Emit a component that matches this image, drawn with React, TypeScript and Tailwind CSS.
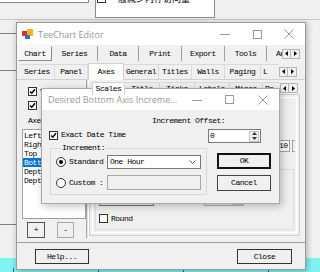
import React from "react";

const mono =
  "font-['Liberation_Mono',monospace] text-[8px] tracking-[-0.5px] leading-none text-black whitespace-nowrap";
const sans = "font-['Open_Sans','Noto_Sans',sans-serif]";

function Check({ checked }: { checked?: boolean }) {
  return (
    <span className="w-[9px] h-[9px] border border-[#333] bg-white flex items-center justify-center shrink-0">
      {checked && (
        <svg width="7" height="7" viewBox="0 0 7 7">
          <path d="M1 3.4 L2.8 5.3 L6 1.3" stroke="#000" strokeWidth="1.4" fill="none" />
        </svg>
      )}
    </span>
  );
}

function Radio({ on }: { on?: boolean }) {
  return (
    <span className="w-[10px] h-[10px] rounded-full border border-[#333] bg-white flex items-center justify-center shrink-0">
      {on && <span className="w-[4px] h-[4px] rounded-full bg-black" />}
    </span>
  );
}

function WinButtons({ w }: { w: string }) {
  return (
    <div className="ml-auto flex h-full">
      <div className={`${w} h-full flex items-center justify-center`}>
        <svg width="10" height="10" viewBox="0 0 10 10">
          <path d="M0 5.5 H10" stroke="#999" strokeWidth="1" />
        </svg>
      </div>
      <div className={`${w} h-full flex items-center justify-center`}>
        <svg width="9" height="9" viewBox="0 0 9 9">
          <rect x="0.5" y="0.5" width="8" height="8" stroke="#999" fill="none" />
        </svg>
      </div>
      <div className={`${w} h-full flex items-center justify-center`}>
        <svg width="10" height="10" viewBox="0 0 10 10">
          <path d="M0.5 0.5 L9.5 9.5 M9.5 0.5 L0.5 9.5" stroke="#999" strokeWidth="1" />
        </svg>
      </div>
    </div>
  );
}

function ScrollArrows() {
  return (
    <div className="flex shrink-0">
      <span className="w-[9px] h-[10px] border border-[#b5b5b5] bg-[#f0f0f0] flex items-center justify-center">
        <svg width="3" height="5" viewBox="0 0 3 5">
          <path d="M3 0 L0 2.5 L3 5Z" fill="#000" />
        </svg>
      </span>
      <span className="w-[9px] h-[10px] border border-l-0 border-[#b5b5b5] bg-[#f0f0f0] flex items-center justify-center">
        <svg width="3" height="5" viewBox="0 0 3 5">
          <path d="M0 0 L3 2.5 L0 5Z" fill="#000" />
        </svg>
      </span>
    </div>
  );
}

function TeeIcon() {
  return (
    <svg width="11" height="10" viewBox="0 0 11 10" className="shrink-0">
      <rect x="0" y="2" width="5" height="5" fill="#d9342b" />
      <rect x="5" y="0" width="6" height="7" fill="#f2b520" />
      <rect x="3" y="6" width="5" height="4" fill="#2f6fd6" />
    </svg>
  );
}

function Desktop() {
  return (
    <>
      <div className="absolute left-0 top-0 w-[89px] h-[3px] bg-white border-r border-b border-[#8c8c8c]" />
      <div className="absolute left-[95px] top-0 w-[120px] h-[18px] bg-white border-x border-b border-[#8c8c8c] overflow-hidden">
        <div className="flex items-end gap-[3px] -mt-[6px] ml-[1px]">
          <span className="w-[9px] h-[9px] border border-[#333] bg-white shrink-0" />
          <span className="text-[9px] leading-[9px] h-[9px] font-['Noto_Sans_CJK_SC',sans-serif]">
            一般减少内存访问量
          </span>
        </div>
      </div>
      <div className="absolute left-0 top-[19px] w-full h-px bg-[#c8c8c8]" />
      <div className="absolute left-0 top-[33px] w-[16px] h-px bg-[#808080]" />
      <div className="absolute left-0 top-[70px] w-[16px] h-px bg-[#808080]" />
      <div className="absolute left-0 top-[224px] w-[16px] h-px bg-[#808080]" />
      <div className="absolute left-0 bottom-0 w-full h-[14px] bg-[#80f2f2] flex items-end pl-[13px] gap-[84px]">
        <span className="w-px h-[4px] bg-[#3458a8]" />
        <span className="w-px h-[4px] bg-[#3458a8]" />
        <span className="w-px h-[4px] bg-[#3458a8]" />
        <span className="w-px h-[4px] bg-[#3458a8]" />
      </div>
    </>
  );
}

const topTabs = [
  { label: "Chart", w: "w-[34px]", sel: true },
  { label: "Series", w: "w-[46px]" },
  { label: "Data", w: "w-[41px]" },
  { label: "Print", w: "w-[43px]" },
  { label: "Export", w: "w-[43px]" },
  { label: "Tools", w: "w-[42px]" },
];

const axesTabs = [
  { label: "Series", w: "w-[35px]" },
  { label: "Panel", w: "w-[33px]" },
  { label: "Axes", w: "w-[36px]", sel: true },
  { label: "General", w: "w-[35px]" },
  { label: "Titles", w: "w-[33px]" },
  { label: "Walls", w: "w-[33px]" },
  { label: "Paging", w: "w-[36px]" },
];

const scaleTabs = [
  { label: "Scales", w: "w-[33px]", sel: true },
  { label: "Title", w: "w-[35px]" },
  { label: "Ticks", w: "w-[35px]" },
  { label: "Labels", w: "w-[35px]" },
  { label: "Minor", w: "w-[33px]" },
];

const axesList = ["Left", "Right", "Top", "Bottom", "Depth", "Depth Top"];

function EditorWindow() {
  return (
    <div className="absolute left-[16px] top-[22px] w-[290px] h-[248px] flex flex-col bg-[#f0f0f0] border border-[#9a9a9a] shadow-[1px_1px_6px_rgba(0,0,0,0.3)]">
      {/* title bar */}
      <div className="h-[22px] bg-white flex items-center shrink-0">
        <span className="ml-[5px]">
          <TeeIcon />
        </span>
        <span className={`ml-[5px] text-[9px] leading-none text-[#999] ${sans}`}>
          TeeChart Editor
        </span>
        <WinButtons w="w-[32px]" />
      </div>

      {/* main tabs */}
      <div className="h-[17px] flex items-center pl-[1px] pr-[5px] shrink-0">
        {topTabs.map((t) => (
          <div
            key={t.label}
            className={`${t.w} h-[15px] flex items-center justify-center ${mono} ${
              t.sel
                ? "border border-t-white border-l-white border-r-[#8a8a8a] border-b-[#8a8a8a] bg-[#f5f5f5]"
                : "border-r border-[#a0a0a0]"
            }`}
          >
            {t.label}
          </div>
        ))}
        <div className={`flex-1 h-[15px] flex items-center pl-[9px] overflow-hidden ${mono}`}>An</div>
        <ScrollArrows />
      </div>

      {/* axes tabs */}
      <div className="h-[17px] flex items-end pl-[3px] pr-[8px] shrink-0">
        {axesTabs.map((t) => (
          <div
            key={t.label}
            className={`${t.w} flex items-center justify-center ${mono} ${
              t.sel
                ? "h-[17px] bg-white border-x border-t border-[#d0d0d0] -mb-px z-10"
                : "h-[15px] border-t border-r border-[#dadada]"
            }`}
          >
            {t.label}
          </div>
        ))}
        <div className={`flex-1 h-[15px] flex items-center pl-[2px] overflow-hidden border-t border-[#dadada] ${mono}`}>L</div>
        <div className="h-[15px] flex items-center">
          <ScrollArrows />
        </div>
      </div>

      {/* body */}
      <div className="flex-1 flex border-t border-[#d0d0d0] pl-[1px] pr-[5px]">
        {/* left panel */}
        <div className="w-[68px] flex flex-col pt-[7px]">
          <div className={`flex items-center gap-[3px] pl-[10px] h-[9px] ${mono}`}>
            <Check checked />
            <span className="w-[2px] overflow-hidden">V</span>
          </div>
          <div className={`flex items-center gap-[3px] pl-[10px] h-[9px] mt-[5px] ${mono}`}>
            <Check checked />
            <span className="w-[2px] overflow-hidden">I</span>
          </div>
          <div className={`pl-[10px] mt-[7px] h-[8px] flex items-center ${mono}`}>
            <span className="w-[13px] overflow-hidden">Axe</span>
          </div>
          <div className="ml-[4px] mt-[4px] w-[64px] h-[90px] bg-white border border-[#a0a0a0] pt-px overflow-hidden">
            {axesList.map((a) => (
              <div
                key={a}
                className={`h-[9px] flex items-center pl-[1px] ${mono} ${
                  a === "Bottom" ? "bg-[#0078d7] text-white" : ""
                }`}
              >
                {a}
              </div>
            ))}
          </div>
          <div className="flex ml-[9px] mt-[3px] gap-[12px]">
            <div className={`w-[18px] h-[16px] border border-[#555] bg-[#f0f0f0] flex items-center justify-center ${mono}`}>
              +
            </div>
            <div className={`w-[17px] h-[16px] border border-[#a8a8a8] bg-[#f0f0f0] flex items-center justify-center ${mono} text-[#a0a0a0]`}>
              -
            </div>
          </div>
        </div>

        {/* splitter */}
        <div className="w-[3px] mb-[4px] border-x border-l-[#a8a8a8] border-r-white bg-[#e4e4e4]" />

        {/* right panel */}
        <div className="flex-1 flex flex-col pt-px pb-[6px]">
          <div className="h-[13px] flex items-end pl-[3px] pr-[2px] shrink-0">
            {scaleTabs.map((t) => (
              <div
                key={t.label}
                className={`${t.w} flex items-center justify-center ${mono} ${
                  t.sel
                    ? "h-[13px] bg-white border-x border-t border-[#d0d0d0] -mb-px z-10"
                    : "h-[12px] border-t border-r border-[#dadada]"
                }`}
              >
                {t.label}
              </div>
            ))}
            <div className={`flex-1 h-[12px] flex items-center pl-[2px] overflow-hidden border-t border-[#dadada] ${mono}`}>
              Pa
            </div>
            <div className="h-[12px] flex items-center">
              <ScrollArrows />
            </div>
          </div>
          <div className="flex-1 border border-[#d0d0d0] p-[2px]">
            <div className="h-full border border-white flex flex-col">
              <div className="mt-[42px] flex justify-end gap-[2px] pr-px">
                <div className={`w-[13px] h-[12px] bg-white border border-[#a0a0a0] flex items-center pl-px ${mono}`}>
                  10
                </div>
                <div className="w-[3px] h-[12px] border border-r-0 border-[#a0a0a0]" />
              </div>
              <div className="flex-1 mt-[17px] mx-[2px] mb-[2px] border border-[#dcdcdc] flex flex-col">
                <div className="mt-[25px] flex items-end">
                  <div className="ml-[3px] w-[55px] h-[11px] border border-[#7a7a7a] bg-[#ececec]" />
                  <div className="ml-[50px] w-[40px] h-[10px] border border-[#b0b0b0] bg-[#ececec] flex justify-end">
                    <div className="w-[11px] h-full bg-[#c8c8c8]" />
                  </div>
                </div>
                <div className={`mt-[8px] ml-[3px] flex items-center gap-[3px] ${mono}`}>
                  <Check />
                  Round
                </div>
              </div>
            </div>
          </div>
        </div>
      </div>

      {/* bottom bar */}
      <div className="h-[27px] shrink-0 border-t border-[#a0a0a0] flex items-center justify-between pl-[18px] pr-[13px] pt-px">
        <div className={`w-[54px] h-[15px] border border-[#333] bg-[#f0f0f0] flex items-center justify-center ${mono}`}>
          Help...
        </div>
        <div className={`w-[55px] h-[15px] border border-[#333] bg-[#f0f0f0] flex items-center justify-center ${mono}`}>
          Close
        </div>
      </div>
    </div>
  );
}

function IncrementDialog() {
  return (
    <div className="absolute left-[41px] top-[88px] w-[239px] h-[116px] flex flex-col bg-[#f0f0f0] border border-[#a8a8a8] shadow-[2px_2px_8px_rgba(0,0,0,0.25)]">
      <div className="h-[21px] bg-white flex items-center shrink-0">
        <span className={`ml-[6px] text-[9px] leading-none text-[#9a9a9a] whitespace-nowrap ${sans}`}>
          Desired Bottom Axis Increme...
        </span>
        <WinButtons w="w-[33px]" />
      </div>

      <div className="flex-1 flex flex-col">
        <div className={`pt-[5px] h-[17px] pl-[110px] flex items-center ${mono}`}>Increment Offset:</div>

        <div className="mt-[2px] flex items-start pl-[7px] pr-[18px]">
          <div className={`flex items-center gap-[3px] h-[10px] mt-px ${mono}`}>
            <Check checked />
            Exact Date Time
          </div>
          <div className="ml-auto w-[53px] h-[14px] bg-white border border-[#7a7a7a] flex items-center">
            <span className={`pl-px ${mono}`}>0</span>
            <div className="ml-auto mr-px w-[10px] h-[11px] border border-[#c0c0c0] bg-[#f0f0f0] flex flex-col items-center justify-center gap-[2px]">
              <svg width="5" height="3" viewBox="0 0 5 3">
                <path d="M0 3 L2.5 0 L5 3Z" fill="#333" />
              </svg>
              <svg width="5" height="3" viewBox="0 0 5 3">
                <path d="M0 0 L2.5 3 L5 0Z" fill="#333" />
              </svg>
            </div>
          </div>
        </div>

        <div className="mt-px flex pl-[8px]">
          <fieldset className="w-[157px] h-[51px] border border-[#d8d8d8] px-[5px]">
            <legend className={`ml-[5px] px-px h-[8px] ${mono}`}>Increment:</legend>
            <div className={`mt-[3px] h-[14px] flex items-center ${mono}`}>
              <Radio on />
              <span className="ml-[3px]">Standard</span>
              <div className="ml-auto w-[94px] h-[14px] bg-white border border-[#7a7a7a] flex items-center pl-[2px] pr-[4px]">
                One Hour
                <svg className="ml-auto" width="7" height="4" viewBox="0 0 7 4">
                  <path d="M0.5 0.5 L3.5 3.5 L6.5 0.5" stroke="#555" fill="none" />
                </svg>
              </div>
            </div>
            <div className={`mt-[6px] h-[15px] flex items-center ${mono}`}>
              <Radio />
              <span className="ml-[3px]">Custom :</span>
              <div className="ml-auto w-[94px] h-[15px] bg-[#f0f0f0] border border-[#a8a8a8]" />
            </div>
          </fieldset>

          <div className="ml-[10px] pt-[9px] flex flex-col gap-[6px]">
            <div className={`w-[54px] h-[16px] border-2 border-[#111] bg-[#f0f0f0] flex items-center justify-center ${mono}`}>
              OK
            </div>
            <div className={`w-[54px] h-[16px] border border-[#444] bg-[#f0f0f0] flex items-center justify-center ${mono}`}>
              Cancel
            </div>
          </div>
        </div>
      </div>
    </div>
  );
}

export default function App() {
  return (
    <div className="relative w-[320px] h-[272px] overflow-hidden bg-[#f0f0f0]">
      <Desktop />
      <EditorWindow />
      <IncrementDialog />
    </div>
  );
}
